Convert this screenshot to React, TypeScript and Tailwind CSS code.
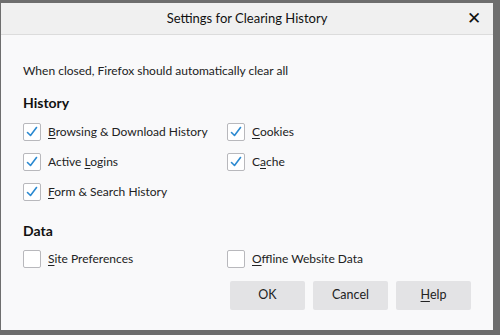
const Check = ({ checked }: { checked: boolean }) => (
  <span className="flex h-[18px] w-[18px] shrink-0 items-center justify-center rounded-[2px] border border-[#b8b8bc] bg-white">
    {checked && (
      <svg width="12" height="12" viewBox="0 0 12 12" fill="none">
        <path d="M1.5 6.5 L4.5 9.5 L10.5 1.5" stroke="#2b8ad1" strokeWidth="1.6" strokeLinecap="round" strokeLinejoin="round" />
      </svg>
    )}
  </span>
);

const Item = ({ label, k, checked }: { label: string; k: number; checked: boolean }) => (
  <label className="flex items-center gap-[7px] text-[12px] text-[#222]">
    <Check checked={checked} />
    <span>
      {label.slice(0, k)}
      <span className="underline underline-offset-2">{label[k]}</span>
      {label.slice(k + 1)}
    </span>
  </label>
);

const Btn = ({ children }: { children: React.ReactNode }) => (
  <button className="h-[29px] w-[75px] rounded-[2px] bg-[#e3e3e5] text-[12.5px] text-[#222]">{children}</button>
);

export default function App() {
  return (
    <div className="h-[335px] w-[500px] bg-[#6e6e6e] pb-[5px] pl-[1px] pr-[7px] pt-[3px]" style={{ fontFamily: 'Lato, "Noto Sans", sans-serif' }}>
      <div className="flex h-full flex-col bg-[#f9f9fa]">
        <div className="relative flex h-[32px] items-center justify-center border-b border-[#dcdcdc] bg-[#f0f0f0] text-[13px] text-[#111]">
          Settings for Clearing History
          <span className="absolute right-[12px] top-[6px] text-[17px] leading-none">✕</span>
        </div>
        <div className="flex flex-1 flex-col px-[22px]">
          <p className="mt-[27px] text-[12px] text-[#222]">When closed, Firefox should automatically clear all</p>
          <h2 className="mt-[12px] text-[14px] font-bold text-[#111]">History</h2>
          <div className="mt-[10px] grid grid-cols-[204px_1fr] gap-y-[12px]">
            <Item label="Browsing & Download History" k={0} checked />
            <Item label="Cookies" k={0} checked />
            <Item label="Active Logins" k={7} checked />
            <Item label="Cache" k={1} checked />
            <Item label="Form & Search History" k={0} checked />
          </div>
          <h2 className="mt-[19px] text-[14px] font-bold text-[#111]">Data</h2>
          <div className="mt-[9px] grid grid-cols-[204px_1fr]">
            <Item label="Site Preferences" k={0} checked={false} />
            <Item label="Offline Website Data" k={0} checked={false} />
          </div>
          <div className="mt-[13px] flex justify-end gap-[8px]">
            <Btn>OK</Btn>
            <Btn>Cancel</Btn>
            <Btn>
              <span className="underline underline-offset-2">H</span>elp
            </Btn>
          </div>
        </div>
      </div>
    </div>
  );
}
